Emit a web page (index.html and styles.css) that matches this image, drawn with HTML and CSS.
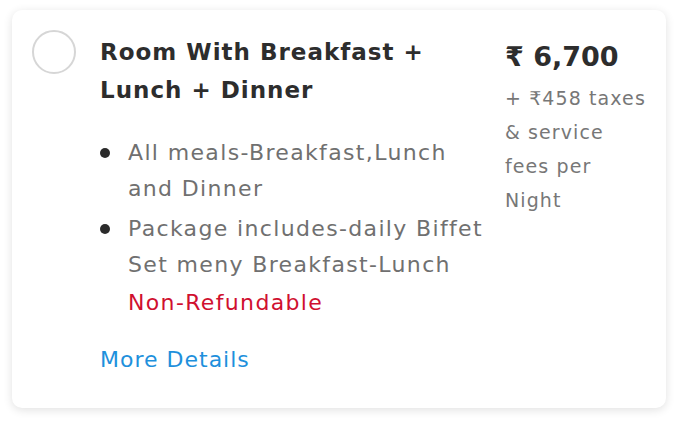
FILE: index.html
```html
<!DOCTYPE html>
<html>
<head>
<meta charset="utf-8">
<link rel="stylesheet" href="styles.css">
</head>
<body>
<div class="card">
  <div class="radio"></div>
  <div class="main">
    <h2 class="title">Room With Breakfast + Lunch + Dinner</h2>
    <ul class="features">
      <li>All meals-Breakfast,Lunch and Dinner</li>
      <li>Package includes-daily Biffet Set meny Breakfast-Lunch</li>
    </ul>
    <div class="refund">Non-Refundable</div>
    <a class="more" href="#">More Details</a>
  </div>
  <div class="price">
    <div class="amount">₹ 6,700</div>
    <div class="taxes">+ ₹458 taxes &amp; service fees per Night</div>
  </div>
</div>
</body>
</html>
```
FILE: styles.css
```css
* { box-sizing: border-box; }
html, body { margin: 0; padding: 0; background: #ffffff; }
body {
  font-family: "DejaVu Sans", "Noto Sans", sans-serif;
  padding: 10px 12px;
}
.card {
  width: 654px;
  height: 398px;
  background: #fff;
  border-radius: 10px;
  box-shadow: 0 2px 10px rgba(0,0,0,0.12);
  display: flex;
  align-items: flex-start;
  padding: 23px 12px 30px 20px;
}
.radio {
  flex: none;
  width: 44px;
  height: 44px;
  border: 2.5px solid #d6d6d6;
  border-radius: 50%;
  margin-top: -3px;
  margin-right: 24px;
}
.main {
  flex: none;
  width: 386px;
  display: flex;
  flex-direction: column;
  align-items: flex-start;
}
.title {
  margin: 0;
  font-size: 23px;
  font-weight: 700;
  letter-spacing: 1px;
  line-height: 38px;
  color: #2d2d2d;
  max-width: 360px;
}
.features {
  margin: 26px 0 0 0;
  padding: 0;
  list-style: none;
  color: #707070;
  font-size: 22px;
  letter-spacing: 1.35px;
  line-height: 36px;
  width: 386px;
}
.features li {
  margin-bottom: 4px;
  padding-left: 28px;
  position: relative;
}
.features li::before {
  content: "";
  position: absolute;
  left: 0;
  top: 13px;
  width: 10px;
  height: 10px;
  border-radius: 50%;
  background: #2b2b2b;
}
.refund {
  color: #d0102f;
  font-size: 22px;
  letter-spacing: 1.35px;
  line-height: 36px;
  margin-top: -2px;
  padding-left: 28px;
}
.more {
  color: #1e90dc;
  font-size: 22px;
  letter-spacing: 1px;
  line-height: 36px;
  text-decoration: none;
  margin-top: 21px;
}
.price {
  flex: none;
  width: 146px;
  margin-left: 19px;
  padding-top: 6px;
}
.amount {
  font-size: 27px;
  font-weight: 700;
  color: #2d2d2d;
  line-height: 36px;
}
.taxes {
  margin-top: 6px;
  color: #777;
  font-size: 19px;
  letter-spacing: 1.1px;
  line-height: 34px;
  max-width: 144px;
}
```
